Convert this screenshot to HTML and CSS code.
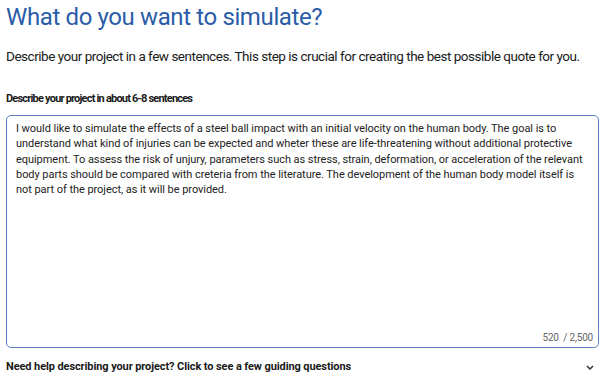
FILE: index.html
```html
<!DOCTYPE html>
<html lang="en">
<head>
<meta charset="utf-8">
<title>What do you want to simulate?</title>
<link rel="stylesheet" href="styles.css">
</head>
<body>
<main class="page">
  <h1 class="title">What do you want to simulate?</h1>
  <p class="intro">Describe your project in a few sentences. This step is crucial for creating the best possible quote for you.</p>
  <label class="label" for="desc">Describe your project in about 6-8 sentences</label>
  <div class="field" id="desc">
    <div class="field-text">I would like to simulate the effects of a steel ball impact with an initial velocity on the human body. The goal is to understand what kind of injuries can be expected and wheter these are life-threatening without additional protective equipment. To assess the risk of unjury, parameters such as stress, strain, deformation, or acceleration of the relevant body parts should be compared with creteria from the literature. The development of the human body model itself is not part of the project, as it will be provided.</div>
    <div class="counter">520&nbsp; / 2,500</div>
  </div>
  <div class="help">
    <span class="help-text">Need help describing your project? Click to see a few guiding questions</span>
    <svg class="chev" width="8" height="5" viewBox="0 0 8 5"><path d="M1 1 L4 4 L7 1" fill="none" stroke="#333" stroke-width="1.5"/></svg>
  </div>
</main>
</body>
</html>
```
FILE: styles.css
```css
* { box-sizing: border-box; }
html, body { margin: 0; padding: 0; background: #fff; }
body { font-family: Roboto, "Liberation Sans", Arial, sans-serif; color: #1a1a1a; }
.page { padding: 2px 6px 0 6px; width: 605px; }
.title { margin: 0; font-size: 24px; line-height: 30px; font-weight: 400; letter-spacing: -0.38px; color: #2b5ca8; white-space: nowrap; }
.intro { margin: 15px 0 0; font-size: 13.5px; line-height: 18px; letter-spacing: -0.48px; color: #1a1a1a; white-space: nowrap; }
.label { display: block; margin-top: 27px; font-size: 11px; line-height: 14px; font-weight: 700; letter-spacing: -0.8px; color: #1a1a1a; }
.field { margin-top: 9px; width: 593px; height: 233px; border: 1px solid #5d82c4; border-radius: 5px; padding: 5px 5px 3px 9px; display: flex; flex-direction: column; justify-content: space-between; }
.field-text { font-size: 11px; line-height: 15.3px; letter-spacing: -0.05px; color: #222; padding-right: 3px; }
.counter { align-self: flex-end; font-size: 10px; line-height: 12px; letter-spacing: -0.2px; color: #666; }
.help { margin-top: 12px; display: flex; align-items: center; justify-content: space-between; padding-right: 5px; }
.help-text { font-size: 11px; line-height: 14px; font-weight: 700; letter-spacing: -0.1px; color: #1a1a1a; }
.chev { display: block; }
```
